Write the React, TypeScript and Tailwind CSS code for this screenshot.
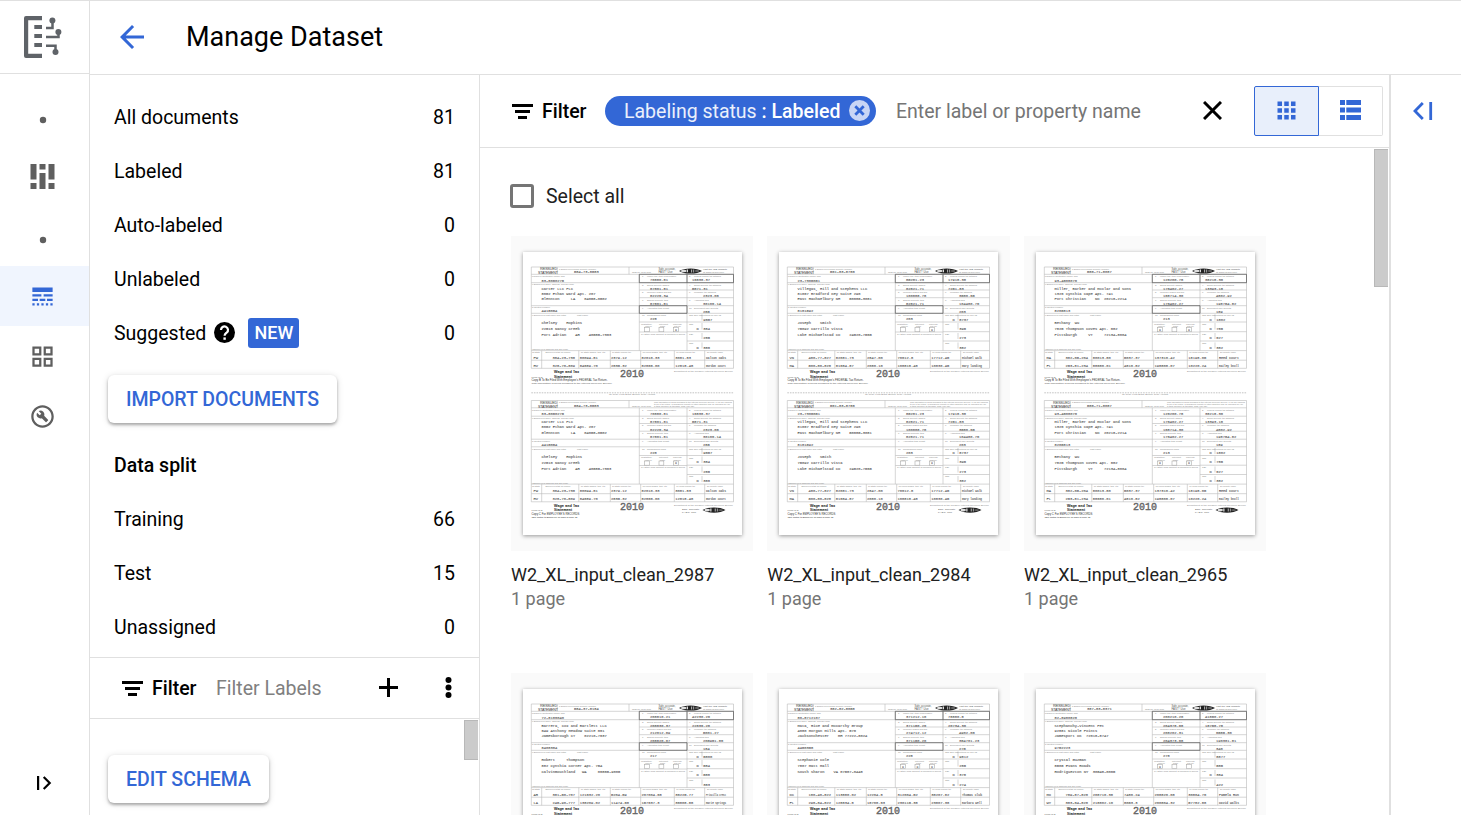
import React from "react";
import {
  MdLineStyle,
  MdOutlineGridView,
  MdOutlineBuildCircle,
  MdArrowBack,
  MdApps,
} from "react-icons/md";

type Doc = {
  name: string;
  ssn: string;
  ein: string;
  company: string[];
  control: string;
  person: string[];
  left: string[];
  right: string[];
  checks: number[];
  states: string[][];
};

const docs: Doc[] = [
  {
    name: "W2_XL_input_clean_2987",
    ssn: "584-73-8583",
    ein: "83-8050275",
    company: ["Carter LLC PLC", "8052 Ethan Ward Apt. 207", "Glennton     LA    04058-0502"],
    control: "4415054",
    person: ["Chelsey    Hopkins", "22510 Nancy Creek", "Port Adrian    AR    40585-7363"],
    left: ["70880.81", "87801.81", "82226.34", "87801.81", "", "228"],
    right: ["16838.37", "5871.31", "2323.06", "30106.14", "285", "   9657", "D  384", "   285", "D  386"],
    checks: [2],
    states: [
      ["PW", "384-23-738", "80094.81", "2379.12", "82010.33", "3081.83", "Dalton Oaks"],
      ["HV", "328-70-809", "84689.70", "2835.32", "82866.00", "12818.48", "Gordon court"],
    ],
  },
  {
    name: "W2_XL_input_clean_2984",
    ssn: "561-83-8786",
    ein: "23-7305051",
    company: ["Villegas, Hill and Stephens LLC", "81067 Bradford Key Suite 290", "East Rachaelbury NH    50685-3081"],
    control: "8181592",
    person: ["Joseph    Smith", "75092 Carrillo Vista", "Lake Michaelstad CO    24520-7565"],
    left: ["85281.23", "82821.71", "100888.78", "82821.71", "", "203"],
    right: ["17918.38", "7251.83", "3580.65", "104480.76", "203", "D  8737", "   395", "   273", "   382"],
    checks: [2],
    states: [
      ["VN", "480-77-827", "82081.73", "2847.00", "70612.8", "17712.45", "Michael Walk"],
      ["MA", "500-80-828", "81684.87", "2080.10", "108818.48", "10830.45", "Gary landing"],
    ],
  },
  {
    name: "W2_XL_input_clean_2965",
    ssn: "586-71-8087",
    ein: "93-4508076",
    company: ["Miller, Barker and Mcclar and Sons", "1326 Cynthia Cape Apt. 741", "Port Christian    ND  20218-2214"],
    control: "8205813",
    person: ["Bethany  Wu", "7825 Thompson Coves Apt. 682", "Pittsburgh     VT     72134-8004"],
    left: ["126200.78", "176402.27", "168714.30", "176402.27", "", "213"],
    right: ["38218.36", "13393.18", "4802.92", "198754.82", "189", "D  1802", "D  785", "D  627", "D  382"],
    checks: [0, 2],
    states: [
      ["MA", "382-05-204", "80013.80", "5037.37", "137310.42", "18198.05", "Reed Court"],
      ["FL", "253-81-234", "88680.01", "4810.82", "198808.07", "10220.24", "Bailey knoll"],
    ],
  },
  {
    name: "W2_XL_input_clean_2960",
    ssn: "584-37-8184",
    ein: "72-8186040",
    company: ["Barrera, Cox and Bartlett LLC", "649 Anthony Meadow Suite 661", "Jamesborough CT    02210-7637"],
    control: "8408384",
    person: ["Robert     Thompson", "882 Cynthia Corner Apt. 754", "Calvinmouthland   WA     06865-9005"],
    left: ["208810.21", "208830.37", "212012.69", "208820.07", "", "217"],
    right: ["42230.26", "22836.28", "5001.27", "205951.86", "184", "D  5800", "D  584", "D  588", "   383"],
    checks: [],
    states: [
      ["AR", "381-50-707", "121632.20", "5204.59", "207004.68", "36225.77", "Priscilla Crest"],
      ["LA", "245-90-777", "138209.02", "11474.58", "157637.3", "36808.88", "Marie Springs"],
    ],
  },
  {
    name: "W2_XL_input_clean_2958",
    ssn: "382-82-8058",
    ein: "80-8712107",
    company: ["Mata, Rice and Mccarthy Group", "4080 Morgan Mills Apt. 576", "Jacksonchester    MH 77222-8024"],
    control: "4450358",
    person: ["Stephanie Cole", "7807 Matt Mall", "South Sharon    VA 07587-0448"],
    left: ["371212.10", "371150.26", "274712.12", "371150.20", "", "228"],
    right: ["78880.8", "20734.36", "4902.06", "354701.23", "275", "D  9812", "   285", "D  378", "D  274"],
    checks: [0, 1, 2],
    states: [
      ["DC", "180-40-822", "113880.02", "12204.8", "312004.52", "38207.82", "Thomas Club"],
      ["FL", "298-84-822", "128834.8", "18708.63", "230115.38", "23807.38", "Barbara Well"],
    ],
  },
  {
    name: "W2_XL_input_clean_2951",
    ssn: "387-83-8371",
    ein: "82-8980828",
    company: ["Stephanchy-Vincent Pet", "92881 Nicole Points", "Jamesport OK  72018-8747"],
    control: "9752223",
    person: ["Crystal Guzman", "8505 Evans Roads", "Rodriguezton NY  30548-0065"],
    left: ["200210.20", "204378.68", "208202.31", "204373.68", "", "278"],
    right: ["41850.27", "18758.78", "6585.30", "190381.81", "340", "   8877", "   585", "D  384", "   422"],
    checks: [0],
    states: [
      ["MD", "789-87-828", "208710.38", "7480.24", "208820.08", "30804.76", "Pamela Run"],
      ["WY", "383-64-828", "218802.10", "8053.3", "200804.32", "57782.88", "David Walks"],
    ],
  },
];

const Tiny = ({ x, y, children, w, size = 2.4 }: { x: number; y: number; children: string; w?: number; size?: number }) => (
  <text x={x} y={y} fontSize={size} fill="#888" textLength={w} lengthAdjust="spacingAndGlyphs" className="font-['Liberation_Sans',sans-serif]">
    {children}
  </text>
);

const Value = ({ x, y, children, size = 3.75, w }: { x: number; y: number; children: string; size?: number; w?: number }) => (
  <text x={x} y={y} fontSize={size} fill="#555" stroke="#666" strokeWidth=".1" textLength={w} lengthAdjust="spacingAndGlyphs" className="whitespace-pre font-['Liberation_Mono',monospace]">
    {children}
  </text>
);

const Seal = ({ x, y }: { x: number; y: number }) => (
  <g transform={`translate(${x} ${y})`}>
    <path d="M-11.5 0C-7-3.400 7-3.400 11.500 0C7 3.400-7 3.400-11.500 0Z" fill="#222" />
    <ellipse cx="-6.8" rx="2.8" ry="1.3" fill="#ddd" />
    <ellipse cx="6.6" rx="2.4" ry=".9" fill="#666" />
    <path d="M-3.800-1.500h1.300v2.800h-1.300zM.800-1.500h.8v3h-.8zM2.900-1.500h.7v3h-.7z" fill="#ddd" />
  </g>
);

const leftY = [22.3, 30.7, 38, 45.7, 53.7, 61.3];
const rightY = [22.3, 30.7, 38, 45.7, 53.7, 61.3, 70.3, 79.7, 89];
const leftLabels = ["Wages, tips, other compensation", "Social security wages", "Medicare wages and tips", "Social security tips", "Allocated tips credit", "Nonqualified plans"];
const rightLabels = ["Federal income tax withheld", "Social security tax withheld", "Medicare tax withheld", "Allocated tips", "Dependent care benefits", "See instructions for box 12", "12b", "12c", "12d"];
const stateX = [10.5, 21.5, 56.8, 88, 118.5, 152.2, 183];
const stateLabels = ["15 State", "Employer's state ID number", "16 State wages, tips, etc.", "17 State income tax", "18 Local wages, tips, etc.", "19 Local income tax", "20 Locality name"];

function FormCopy({ doc, dy, first }: { doc: Doc; dy: number; first: boolean }) {
  return (
    <g transform={`translate(0 ${dy})`}>
      <g fill="none" stroke="#b8b8b8" strokeWidth="0.6">
        <path d="M8.3 15H210.5V116.3H8.3ZM34.300 15v7.300M106 15v7.300M8.300 22.300H210.500M8.300 30.700H210.500M8.300 53.700H210.500M8.300 61.300H210.500M8.300 98.600H210.500M8.300 108.200H210.500" />
        <path d="M116.300 22.300V98.600M164 22.300V98.600M116.300 38H210.500M116.300 45.700H210.500M116.300 70H210.500M116.300 80H164M164 79.700h46.500M164 89h46.500M179 62.500v6M179 71v6.500M179 81v6M179 90.500v6" />
        <path d="M18.700 98.600V116.300M55.800 98.600V116.300M87.300 98.600V116.300M117.700 98.600V116.300M151.300 98.600V116.300M181.700 98.600V116.300" />
      </g>
      {first && (
        <path d="M116.3 22.3H210.5V30.7H116.3ZM164 22.3V30.7M116.3 53.7H164V61.3H116.3Z" fill="none" stroke="#555" strokeWidth="0.7" />
      )}
      <text x="17" y="18.2" fontSize="3.6" fill="#444" textLength="17" className="font-['Liberation_Sans',sans-serif]">REISSUED</text>
      <text x="15" y="22" fontSize="3.6" fill="#333" textLength="20" className="font-['Liberation_Sans',sans-serif]">STATEMENT</text>
      <Tiny x={36} y={17.6} w={37}>a Employee's social security number</Tiny>
      <Value x={51} y={21.4}>{doc.ssn}</Value>
      <Tiny x={109} y={21.4} w={19}>OMB No. 1545-0008</Tiny>
      {first ? (
        <>
          <text x="135.5" y="17.6" fontSize="2.6" fill="#555" textLength="17" className="font-['Liberation_Sans',sans-serif]">Safe, accurate,</text>
          <text x="135.5" y="21.4" fontSize="2.8" fill="#555" textLength="14" className="font-['Liberation_Sans',sans-serif]">FAST! Use</text>
          <Seal x={167.5} y={19} />
          <text x="180" y="17.6" fontSize="2.4" fill="#444" textLength="24" className="font-['Liberation_Sans',sans-serif]">Visit the IRS Website</text>
          <Tiny x={180} y={21.4} w={21}>at www.irs.gov/efile</Tiny>
        </>
      ) : (
        <>
          <Tiny x={131} y={17.2} w={78} size={2}>This information is being furnished to the Internal Revenue Service. If you are required</Tiny>
          <Tiny x={131} y={19.6} w={76} size={2}>to file a tax return, a negligence penalty or other sanction may be imposed on you</Tiny>
          <Tiny x={131} y={21.9} w={40} size={2}>if this income is taxable and you fail</Tiny>
        </>
      )}
      <Tiny x={9} y={25.2} w={33}>b Employer identification number (EIN)</Tiny>
      <Value x={18.5} y={29.6}>{doc.ein}</Value>
      <Tiny x={9} y={33.4} w={42}>c Employer's name, address, and ZIP code</Tiny>
      {doc.company.map((line, i) => (
        <Value key={i} x={18.5} y={37.8 + i * 5.1}>{line}</Value>
      ))}
      <Tiny x={9} y={56.4} w={18}>d Control number</Tiny>
      <Value x={18.5} y={60.4}>{doc.control}</Value>
      <Tiny x={9} y={64} w={34}>e Employee's first name and initial</Tiny>
      <Tiny x={54} y={64} w={11}>Last name</Tiny>
      {doc.person.map((line, i) => (
        <Value key={i} x={18.5} y={72.3 + i * 6}>{line}</Value>
      ))}
      <Tiny x={9} y={98.2} w={36}>f Employee's address and ZIP code</Tiny>
      {leftLabels.map((label, i) => (
        <React.Fragment key={label}>
          <Tiny x={119} y={leftY[i] + 2.8}>{String(i * 2 + 1)}</Tiny>
          <Tiny x={124} y={leftY[i] + 2.8} w={Math.min(29, label.length * 1.05)}>{label}</Tiny>
          <Value x={127} y={leftY[i] + 7}>{doc.left[i]}</Value>
        </React.Fragment>
      ))}
      <Tiny x={118} y={72.6} w={11}>13 Statutory</Tiny>
      <Tiny x={122} y={75} w={7}>employee</Tiny>
      <Tiny x={136} y={72.6} w={9}>Retirement</Tiny>
      <Tiny x={137} y={75} w={5}>plan</Tiny>
      <Tiny x={150} y={72.6} w={9}>Third-party</Tiny>
      <Tiny x={151} y={75} w={7}>sick pay</Tiny>
      {[0, 1, 2].map((i) => (
        <g key={i}>
          <rect x={121.5 + i * 14.5} y="75.5" width="4.8" height="4.2" fill="#fff" stroke="#aaa" strokeWidth=".6" />
          {doc.checks.includes(i) && <Value x={122.9 + i * 14.5} y={78.9} size={3.2}>X</Value>}
        </g>
      ))}
      <Tiny x={118} y={82.6} w={44}>14 Other     This amount is included in boxes</Tiny>
      {rightLabels.map((label, i) => (
        <React.Fragment key={label}>
          <Tiny x={166} y={rightY[i] + 2.8}>{i < 5 ? String(i * 2 + 2) : i === 5 ? "12a" : ""}</Tiny>
          <Tiny x={i > 5 ? 166 : 171} y={rightY[i] + 2.8} w={i > 5 ? 4 : Math.min(27, label.length * 1.05)}>{label}</Tiny>
          <Value x={i < 2 ? 169 : i < 5 ? 180 : 173.5} y={rightY[i] + (i < 5 ? 7 : 7.6)}>{doc.right[i]}</Value>
        </React.Fragment>
      ))}
      {stateLabels.map((label, i) => (
        <Tiny key={label} x={i === 0 ? 9 : stateX[i] + 1} y={101.4} w={Math.min(25, label.length)}>{label}</Tiny>
      ))}
      {doc.states.map((row, r) =>
        row.map((cell, i) => (
          <Value key={`${r}-${i}`} x={stateX[i] + (i === 1 ? 8 : 0)} y={106.8 + r * 7.7} size={i === 6 ? 3 : 3.75} w={i === 6 ? 20 : undefined}>
            {cell}
          </Value>
        )),
      )}
      <text x="31" y="121" fontSize="3.5" fill="#222" stroke="#222" strokeWidth=".15" textLength="25" className="font-['Liberation_Sans',sans-serif]">Wage and Tax</text>
      <text x="31" y="125.5" fontSize="3.5" fill="#222" stroke="#222" strokeWidth=".15" textLength="18" className="font-['Liberation_Sans',sans-serif]">Statement</text>
      <text x="97" y="124.5" fontSize="10.5" fill="#666" stroke="#666" strokeWidth=".4" textLength="24" lengthAdjust="spacingAndGlyphs" className="font-['Liberation_Mono',monospace]">2010</text>
      <Tiny x={151} y={120.2} w={59}>Department of the Treasury-Internal Revenue Service</Tiny>
      <text x="8.5" y="125.7" fontSize="2.5" fill="#555" textLength="11" className="font-['Liberation_Sans',sans-serif]">Form W-2</text>
      <text x="8.5" y="129" fontSize="2.7" fill="#333" textLength={first ? 76 : 48} lengthAdjust="spacingAndGlyphs" className="font-['Liberation_Sans',sans-serif]">
        {first ? "Copy B To Be Filed With Employee's FEDERAL Tax Return." : "Copy C For EMPLOYEE'S RECORDS"}
      </text>
      <text x="8.5" y="132" fontSize="2.4" fill={first ? "#555" : "#222"} textLength={first ? 81 : 46} lengthAdjust="spacingAndGlyphs" className="font-['Liberation_Sans',sans-serif]">
        {first ? "This information is being furnished to the Internal Revenue Service." : "(See Notice to Employee on back of Copy B)"}
      </text>
      {!first && (
        <>
          <text x="159" y="124.8" fontSize="2.4" fill="#444" textLength="18" className="font-['Liberation_Sans',sans-serif]">Safe, accurate,</text>
          <text x="159" y="127.5" fontSize="2.4" fill="#444" textLength="14" className="font-['Liberation_Sans',sans-serif]">FAST! Use</text>
          <Seal x={191} y={124.6} />
        </>
      )}
    </g>
  );
}

const Page = ({ doc }: { doc: Doc }) => (
  <svg width="219" height="283" viewBox="0 0 219 283" className="block">
    <FormCopy doc={doc} dy={0} first />
    <path d="M8.3 140.8H210.5" stroke="#aaa" strokeWidth=".7" strokeDasharray="1.6 1" />
    <Tiny x={86} y={143.4} w={46}>To Tear: Fold Back Before Tear Across</Tiny>
    <FormCopy doc={doc} dy={133.5} first={false} />
  </svg>
);

const FilterIcon = () => (
  <svg width="21" height="15" viewBox="0 0 21 15" fill="#000" className="shrink-0">
    <path d="M0 0h21v3H0zM3 6h15v3H3zM6 12h9v3H6z" />
  </svg>
);

const Dot = () => (
  <svg width="8" height="8" viewBox="0 0 8 8" fill="#5f5f5f">
    <circle cx="4" cy="4" r="3.2" />
  </svg>
);

const Row = ({ label, value, children }: { label: string; value?: number; children?: React.ReactNode }) => (
  <div className="flex h-[54px] items-center pr-6 pl-6">
    <span className="mt-0.5">{label}</span>
    {children}
    <span className="mt-0.5 ml-auto">{value}</span>
  </div>
);

const RaisedButton = ({ children, width }: { children: string; width: string }) => (
  <button className={`ml-[18px] block h-12 rounded-md bg-white pt-0.5 text-[19.5px] font-medium text-[#3367d6] shadow-[0_2px_3px_rgba(0,0,0,.28),0_1px_7px_rgba(0,0,0,.14)] ${width}`}>
    {children}
  </button>
);

export default function App() {
  return (
    <div className="flex h-[815px] w-[1461px] overflow-hidden border-t border-[#e0e0e0] bg-white font-[Roboto,sans-serif] text-[19.5px] leading-6 text-black">
      <nav className="flex w-[90px] shrink-0 flex-col border-r border-[#e0e0e0]">
        <div className="h-[73px] shrink-0 border-b border-[#e0e0e0]">
          <svg width="89" height="72" viewBox="0 1 89 72" className="block">
            <path d="M42 16v4.2H28.2v33.6H42V58H26a2 2 0 0 1-2-2V18a2 2 0 0 1 2-2zM34.3 25H42v4h-7.7zM34.3 34H42v4h-7.7zM34.3 43H42v4h-7.7z" fill="#5f6368" />
            <path d="M46 28h6.5v-7M46 37h12.5v-5M46 45.7h9.5v6" fill="none" stroke="#5f6368" strokeWidth="2.5" />
            <g fill="#5f6368"><circle cx="52.4" cy="20.5" r="3" /><circle cx="58.4" cy="32" r="3" /><circle cx="55.5" cy="52" r="3" /></g>
          </svg>
        </div>
        <div className="flex flex-col pt-3 text-[27px] text-[#5f5f5f]">
          <div className="flex h-[60px] w-[85px] items-center justify-center pt-[7px]"><Dot /></div>
          <div className="flex h-[60px] w-[85px] items-center justify-center">
            <svg width="25" height="25" viewBox="0 0 25 25" fill="currentColor"><path d="M.5 0h6v15.500h-6zM.5 19h6v6h-6zM9.500 0h6v5.500h-6zM9.500 9h6v16h-6zM18.500 0h6v15.500h-6zM18.500 19h6v6h-6z" /></svg>
          </div>
          <div className="flex h-[60px] w-[85px] items-center justify-center pt-[7px]"><Dot /></div>
          <div className="flex h-[60px] items-center justify-center bg-[#f0f5fe] pr-1 text-[#3367d6]"><MdLineStyle /></div>
          <div className="flex h-[60px] w-[85px] items-center justify-center"><MdOutlineGridView /></div>
          <div className="flex h-[60px] w-[85px] items-center justify-center"><MdOutlineBuildCircle /></div>
        </div>
        <svg width="15" height="14" viewBox="0 0 15 14" className="mt-auto mb-[25px] ml-[37px]" fill="none" stroke="#000" strokeWidth="2.2"><path d="M1.1 0v14M6.7 1l6 6-6 6" /></svg>
      </nav>

      <div className="flex min-w-0 flex-1 flex-col">
        <header className="flex h-[74px] shrink-0 items-center border-b border-[#e0e0e0] pb-0.5 pl-6">
          <MdArrowBack className="h-9 w-9 text-[#3367d6]" />
          <h1 className="ml-9 text-[27px] leading-9">Manage Dataset</h1>
        </header>

        <div className="flex min-h-0 flex-1">
          <aside className="flex w-[390px] shrink-0 flex-col border-r border-[#e0e0e0]">
            <div className="h-[583px] shrink-0 border-b border-[#e0e0e0] pt-[15px]">
              <Row label="All documents" value={81} />
              <Row label="Labeled" value={81} />
              <Row label="Auto-labeled" value={0} />
              <Row label="Unlabeled" value={0} />
              <Row label="Suggested" value={0}>
                <svg width="21" height="21" viewBox="0 0 21 21" className="mb-px ml-2">
                  <circle cx="10.5" cy="10.5" r="10.5" />
                  <path d="M7 8a3.5 3.5 0 1 1 5.8 2.5c-1.3 1.1-2.2 1.6-2.2 3.2" fill="none" stroke="#fff" strokeWidth="2.2" />
                  <path d="M9.4 15.4h2.4v2.4H9.4z" fill="#fff" />
                </svg>
                <span className="ml-[13px] flex h-[30px] w-[51px] items-center justify-center rounded-[3px] bg-[#3367d6] text-[18px] font-medium text-white">NEW</span>
              </Row>
              <div className="py-[15px]"><RaisedButton width="w-[229px]">IMPORT DOCUMENTS</RaisedButton></div>
              <div className="font-medium"><Row label="Data split" /></div>
              <Row label="Training" value={66} />
              <Row label="Test" value={15} />
              <Row label="Unassigned" value={0} />
            </div>
            <div className="flex h-[61px] shrink-0 items-center border-b border-[#e0e0e0] pl-8">
              <FilterIcon />
              <span className="mt-0.5 ml-[9px] w-[44px] font-medium">Filter</span>
              <span className="mt-0.5 ml-5 text-[#808080]">Filter Labels</span>
              <svg width="19" height="19" viewBox="0 0 19 19" className="mb-0.5 ml-auto" fill="#000"><path d="M8 0h3v8h8v3h-8v8H8v-8H0V8h8z" /></svg>
              <svg width="7" height="21" viewBox="0 0 7 21" className="mb-0.5 mr-[27px] ml-[47px]" fill="#000"><circle cx="3.5" cy="3" r="3" /><circle cx="3.5" cy="10.5" r="3" /><circle cx="3.5" cy="18" r="3" /></svg>
            </div>
            <div className="flex flex-1 items-start justify-between pt-px">
              <div className="pt-[35px]"><RaisedButton width="w-[161px]">EDIT SCHEMA</RaisedButton></div>
              <div className="mr-px h-10 w-[14px] border border-r-0 border-[#b8b8b8] bg-[#cbcbcb]" />
            </div>
          </aside>

          <main className="flex w-[909px] shrink-0 flex-col">
            <div className="flex h-[73px] shrink-0 items-center border-b border-[#e0e0e0] pl-8">
              <FilterIcon />
              <span className="mt-0.5 ml-[9px] w-[45px] font-medium">Filter</span>
              <div className="ml-[18px] flex h-[30px] w-[271px] items-center rounded-full bg-[#3367d6] pl-[19px] text-white">
                <span className="mt-0.5 whitespace-pre text-white/90">Labeling status </span>
                <span className="mt-0.5 font-medium">: Labeled</span>
                <svg width="21" height="21" viewBox="0 0 21 21" className="mr-[6px] mb-px ml-auto">
                  <circle cx="10.5" cy="10.5" r="10.5" fill="#c8d6f5" />
                  <path d="M6.3 6.3l8.4 8.4M14.7 6.3l-8.4 8.4" stroke="#3367d6" strokeWidth="2.8" />
                </svg>
              </div>
              <span className="mt-0.5 ml-5 text-[#757575]">Enter label or property name</span>
              <svg width="19" height="19" viewBox="0 0 19 19" className="mr-[32px] mb-px ml-auto" stroke="#000" strokeWidth="3"><path d="M1 1l17 17M18 1L1 18" /></svg>
              <div className="mr-[6px] flex h-[50px] w-[129px]">
                <div className="flex w-[65px] items-center justify-center rounded-l-[2px] border border-[#3367d6] bg-[#e8effb]"><MdApps className="mb-px h-[27px] w-[27px] text-[#3367d6]" /></div>
                <div className="flex w-16 items-center justify-center rounded-r-[2px] border border-l-0 border-[#e0e0e0]">
                  <svg width="21" height="20" viewBox="0 0 21 20" fill="#3367d6" className="mb-0.5"><path d="M0 0h5v5H0zM6.3 0H21v5H6.3zM0 7.5h5v5H0zM6.3 7.5H21v5H6.3zM0 15h5v5H0zM6.3 15H21v5H6.3z" /></svg>
                </div>
              </div>
            </div>
            <div className="flex min-h-0 flex-1 justify-between pt-px">
              <div className="pl-[30px]">
                <label className="mt-[35px] flex h-6 items-center gap-3">
                  <span className="h-6 w-6 rounded-[3px] border-3 border-[#757575]" />
                  <span className="mt-0.5 text-[#212121]">Select all</span>
                </label>
                <div className="mt-7 ml-px grid grid-cols-[242px_242.5px_242px] gap-x-[14.25px]">
                  {docs.map((doc) => (
                    <article key={doc.name} className="h-[437px]">
                      <div className="h-[315px] bg-[#fafafa] pt-4 pl-3">
                        <div className="w-[219px] bg-white shadow-[0_1px_4px_rgba(0,0,0,.4)]"><Page doc={doc} /></div>
                      </div>
                      <div className="mt-3 text-[18px] leading-6 text-[#212121]">{doc.name}</div>
                      <div className="text-[18px] leading-6 text-[#757575]">1 page</div>
                    </article>
                  ))}
                </div>
              </div>
              <div className="mr-px h-[138px] w-[14px] border border-r-0 border-[#b8b8b8] bg-[#cbcbcb]" />
            </div>
          </main>

          <div className="flex-1 border-l-2 border-[#e0e0e0] pt-[27px] pl-[22px]">
            <svg width="20" height="18" viewBox="0 0 20 18" fill="none" stroke="#3367d6" strokeWidth="2.8"><path d="M17.7 0v18M9.8 1L2 9l7.8 8" /></svg>
          </div>
        </div>
      </div>
    </div>
  );
}
